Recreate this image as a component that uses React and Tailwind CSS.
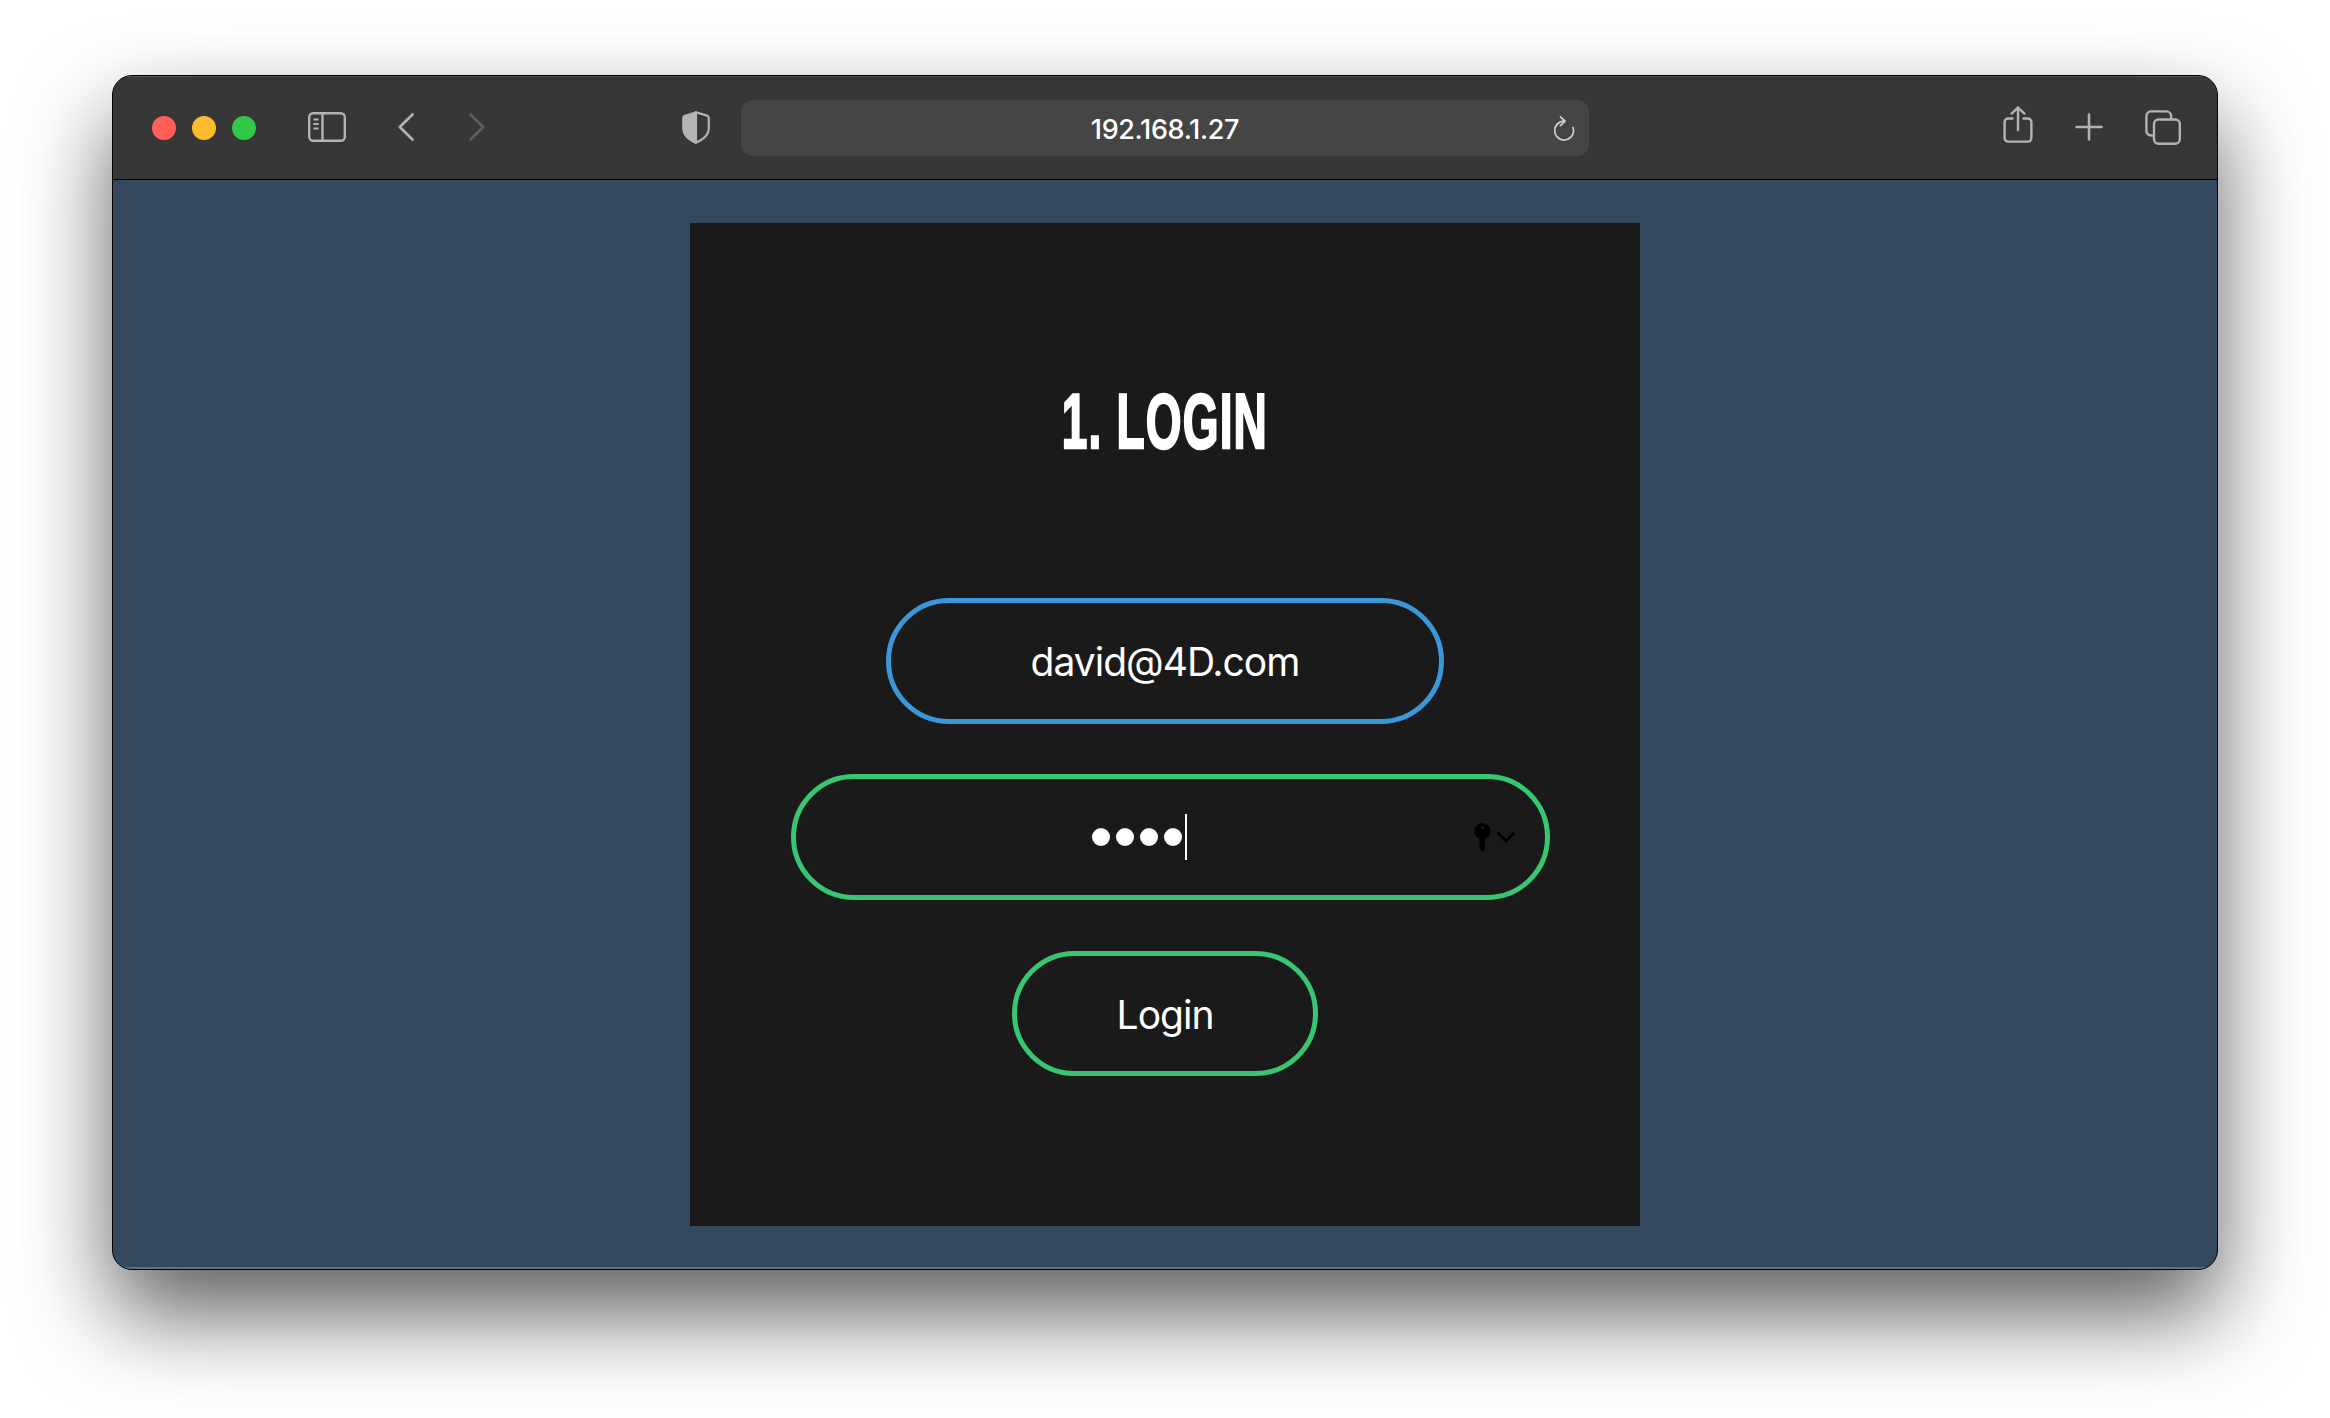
import React from 'react';

const uiFont = "[font-family:Inter,'Liberation_Sans',sans-serif]";

function Toolbar() {
  return (
    <div className="flex h-[104px] shrink-0 items-center border-b border-black bg-[#373738] pl-[39px] shadow-[inset_0_1px_0_rgba(255,255,255,0.14)]">
      {/* traffic lights */}
      <div className="flex gap-4">
        <div className="h-6 w-6 rounded-full bg-[#ff5f57]" />
        <div className="h-6 w-6 rounded-full bg-[#febc2e]" />
        <div className="h-6 w-6 rounded-full bg-[#32c748]" />
      </div>

      <svg className="ml-[52px] mt-[-2px]" width="38" height="30" viewBox="0 0 38 30" fill="none" stroke="#b3b3b4" strokeWidth="2.4">
        <rect x="1.2" y="1.2" width="35.6" height="27.6" rx="4" />
        <path d="M14.5 1.2V28.8" />
        <path d="M5.4 7.5H10.6M5.4 12H10.6M5.4 16.5H10.6" strokeWidth="1.8" />
      </svg>

      <svg className="ml-[52px] mt-[-2px]" width="16" height="28" viewBox="0 0 16 28" fill="none" stroke="#b3b3b4" strokeWidth="2.6" strokeLinecap="round" strokeLinejoin="round">
        <path d="M14.5 1.5L1.8 14L14.5 26.5" />
      </svg>
      <svg className="ml-[55px] mt-[-2px]" width="16" height="28" viewBox="0 0 16 28" fill="none" stroke="#5f5f60" strokeWidth="2.6" strokeLinecap="round" strokeLinejoin="round">
        <path d="M1.5 1.5L14.2 14L1.5 26.5" />
      </svg>

      <svg className="ml-[197px] mt-[-1px]" width="28" height="33" viewBox="0 0 28 33">
        <path d="M14 1.2L25 4.6C26.2 5 26.8 5.8 26.8 7V17.5C26.8 24 21 28.6 14 31.8Z" fill="none" stroke="#b3b3b4" strokeWidth="2.2" strokeLinejoin="round" />
        <path d="M14 0.2L2.6 3.8C1 4.3 0.2 5.3 0.2 7V17.5C0.2 24.6 6.4 29.6 14 33Z" fill="#b3b3b4" />
      </svg>

      {/* address bar */}
      <div className="relative ml-[31px] flex h-14 w-[848px] items-center justify-center rounded-xl bg-[#454546]">
        <span className={`${uiFont} pt-[5px] text-[27px] font-medium tracking-[-0.35px] text-white`}>192.168.1.27</span>
        <svg className="absolute right-[14px] top-[16px]" width="22" height="25" viewBox="0 0 22 25" fill="none" stroke="#cfcfcf" strokeWidth="1.7" strokeLinecap="round" strokeLinejoin="round">
          <path d="M11 5.2A9.4 9.4 0 1 0 20 11.5" />
          <path d="M7.5 0.8L12 5.2L7.5 9.6" />
        </svg>
      </div>

      <svg className="ml-[414px] mt-[-6px]" width="30" height="37" viewBox="0 0 30 37" fill="none" stroke="#b3b3b4" strokeWidth="2.4" strokeLinecap="round" strokeLinejoin="round">
        <path d="M9.5 12.5H5.2a3.6 3.6 0 0 0-3.6 3.6V32a3.6 3.6 0 0 0 3.6 3.6H24.8a3.6 3.6 0 0 0 3.6-3.6V16.1a3.6 3.6 0 0 0-3.6-3.6H20.5" />
        <path d="M15 1.6V24" />
        <path d="M8.6 7.6L15 1.6L21.4 7.6" />
      </svg>

      <svg className="ml-[42px] mt-[-1px]" width="28" height="28" viewBox="0 0 28 28" fill="none" stroke="#b3b3b4" strokeWidth="2.6" strokeLinecap="round">
        <path d="M14 1.5V26.5M1.5 14H26.5" />
      </svg>

      <svg className="ml-[42px] mt-[-1px]" width="36" height="35" viewBox="0 0 36 35" fill="none" stroke="#b3b3b4" strokeWidth="2.4" strokeLinecap="round" strokeLinejoin="round">
        <rect x="9" y="9.5" width="25.8" height="24.3" rx="4.5" />
        <path d="M9 25.5H6a4.6 4.6 0 0 1-4.6-4.6V6a4.6 4.6 0 0 1 4.6-4.6H21.5a4.6 4.6 0 0 1 4.6 4.6V9.5" />
      </svg>
    </div>
  );
}

function PasswordField() {
  return (
    <div className="ml-[10px] mt-[50px] flex h-[126px] w-[759px] items-center rounded-[63px] border-[5px] border-[#37c772] pl-[296px] pr-[30px]">
      <div className="flex gap-[6px]">
        <span className="h-[18px] w-[18px] rounded-full bg-white" />
        <span className="h-[18px] w-[18px] rounded-full bg-white" />
        <span className="h-[18px] w-[18px] rounded-full bg-white" />
        <span className="h-[18px] w-[18px] rounded-full bg-white" />
      </div>
      <span className="ml-[3px] h-[46px] w-[2px] bg-white" />
      {/* keychain hint */}
      <svg className="ml-auto" width="17" height="29" viewBox="0 0 17 29">
        <path d="M8.5 0a8.2 8.2 0 0 1 3 15.8V18l-1.6 1.5L11.5 21l-1.6 1.5L11.5 24v1.5L8.5 29 5.5 25.5V15.8A8.2 8.2 0 0 1 8.5 0Z" fill="#000" />
        <circle cx="8.5" cy="4.5" r="1.6" fill="#1a1a1a" />
      </svg>
      <svg className="ml-[6px]" width="18" height="11" viewBox="0 0 18 11" fill="none" stroke="#000" strokeWidth="3" strokeLinecap="round" strokeLinejoin="round">
        <path d="M1.5 1.5L9 9L16.5 1.5" />
      </svg>
    </div>
  );
}

export default function App() {
  return (
    <div className="min-h-screen bg-white pl-[112px] pt-[75px]">
      <div className="flex h-[1195px] w-[2106px] flex-col overflow-hidden rounded-[20px] border border-black bg-[#34495e] shadow-[0_44px_90px_rgba(0,0,0,0.63)]">
        <Toolbar />
        <div className="flex flex-1 justify-center pt-[43px] shadow-[inset_0_-2px_0_rgba(255,255,255,0.22)]">
          <div className={`${uiFont} flex h-[1003px] w-[950px] flex-col items-center bg-[#1a1a1a] text-white`}>
            <h1 className="mb-[138px] mt-[159px] scale-x-[0.59] text-[78px] font-bold leading-[78px] tracking-[2px] [-webkit-text-stroke:2.5px_white] [font-family:'Liberation_Sans',sans-serif]">
              1. LOGIN
            </h1>
            <div className="flex h-[126px] w-[558px] items-center justify-center rounded-[63px] border-[5px] border-[#3a97d9] pt-[3px] text-[39px] tracking-[-1px]">
              david@4D.com
            </div>
            <PasswordField />
            <button className="mt-[51px] h-[125px] w-[306px] rounded-[63px] border-[5px] border-[#37c772] pt-[3px] text-[39px] tracking-[-1px]">
              Login
            </button>
          </div>
        </div>
      </div>
    </div>
  );
}
